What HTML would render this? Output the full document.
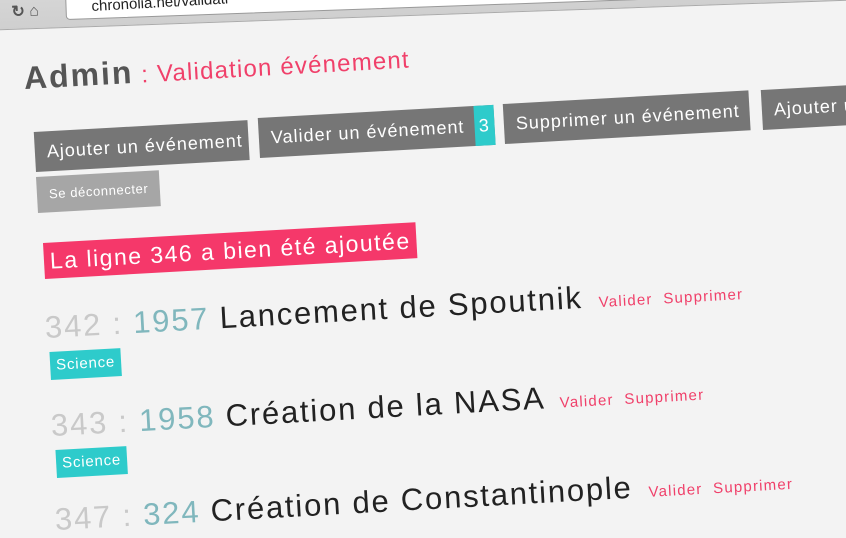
<!DOCTYPE html>
<html><head><meta charset="utf-8"><style>
html,body{margin:0;padding:0;width:846px;height:520px;overflow:hidden;background:#f3f3f3;font-family:"Liberation Sans",sans-serif}
.a{position:absolute;transform:rotate(-3.2deg);transform-origin:left bottom;white-space:nowrap}
.btn{background:#767676;color:#fff;font-size:18px;padding:0 12px;line-height:40px;letter-spacing:1px}
.row{font-size:31px;color:#222;letter-spacing:1.8px}
.lk{font-size:15px;color:#f0406a;letter-spacing:1.2px}
.tag{background:#2ecbcb;color:#fff;font-size:15px;line-height:28px;padding:0 6px;letter-spacing:.8px}
</style></head><body>
<div style="position:absolute;left:-20px;top:-34px;width:900px;height:64px;background:linear-gradient(#ddd,#cfcfcf);transform:rotate(-2deg);transform-origin:left bottom;border-bottom:1px solid #aaa"></div>
<div style="position:absolute;left:66px;top:-16px;width:800px;height:34px;background:#fff;border:1px solid #999;border-radius:4px;transform:rotate(-2deg);transform-origin:left bottom"></div>
<div class="a" style="left:92px;top:-2px;font-size:15px;color:#222">chronolia.net/validati</div>
<div class="a" style="left:12px;top:2px;font-size:16px;color:#555;font-weight:bold">↻ ⌂</div>

<div class="a" style="left:25px;top:60px;font-size:32px;font-weight:bold;color:#555;letter-spacing:2px">Admin<span style="font-size:24px;font-weight:normal;color:#f0406a;letter-spacing:1.2px"> : Validation événement</span></div>

<div class="a btn" style="left:36px;top:132px;width:190px">Ajouter un événement</div>
<div class="a btn" style="left:260px;top:118px;padding-right:0">Valider un événement<span style="display:inline-block;background:#2ecbcb;width:20px;text-align:center;margin-left:10px">3</span></div>
<div class="a btn" style="left:505px;top:104px;width:222px">Supprimer un événement</div>
<div class="a btn" style="left:763px;top:90px;width:120px">Ajouter un</div>

<div class="a" style="left:38px;top:177px;background:#a6a6a6;color:#fff;font-size:13px;line-height:36px;padding:0 12px;letter-spacing:.6px">Se déconnecter</div>

<div class="a" style="left:45px;top:243px;background:#f5386a;color:#fff;font-size:23px;line-height:36px;padding:0 6px;letter-spacing:1.5px">La ligne 346 a bien été ajoutée</div>

<div class="a row" style="left:46px;top:310px"><span style="color:#c9c9c9">342 : </span><span style="color:#80b7bd">1957</span> Lancement de Spoutnik <span class="lk">&nbsp;Valider &nbsp;Supprimer</span></div>
<div class="a tag" style="left:51px;top:352px">Science</div>

<div class="a row" style="left:52px;top:408px"><span style="color:#c9c9c9">343 : </span><span style="color:#80b7bd">1958</span> Création de la NASA <span class="lk">&nbsp;Valider &nbsp;Supprimer</span></div>
<div class="a tag" style="left:57px;top:450px">Science</div>

<div class="a row" style="left:56px;top:502px"><span style="color:#c9c9c9">347 : </span><span style="color:#80b7bd">324</span> Création de Constantinople <span class="lk">&nbsp;Valider &nbsp;Supprimer</span></div>
</body></html>
